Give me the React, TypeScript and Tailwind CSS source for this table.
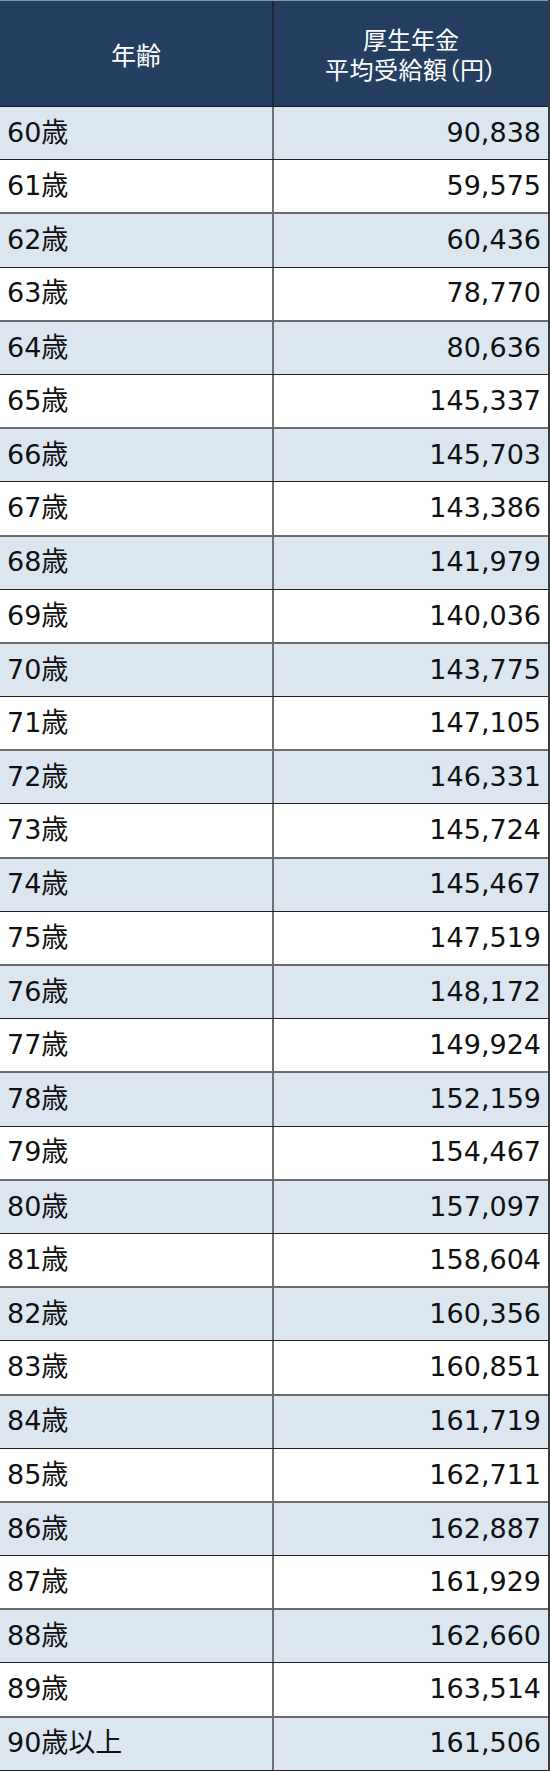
const rows: [string, string][] = [
  ["60歳", "90,838"],
  ["61歳", "59,575"],
  ["62歳", "60,436"],
  ["63歳", "78,770"],
  ["64歳", "80,636"],
  ["65歳", "145,337"],
  ["66歳", "145,703"],
  ["67歳", "143,386"],
  ["68歳", "141,979"],
  ["69歳", "140,036"],
  ["70歳", "143,775"],
  ["71歳", "147,105"],
  ["72歳", "146,331"],
  ["73歳", "145,724"],
  ["74歳", "145,467"],
  ["75歳", "147,519"],
  ["76歳", "148,172"],
  ["77歳", "149,924"],
  ["78歳", "152,159"],
  ["79歳", "154,467"],
  ["80歳", "157,097"],
  ["81歳", "158,604"],
  ["82歳", "160,356"],
  ["83歳", "160,851"],
  ["84歳", "161,719"],
  ["85歳", "162,711"],
  ["86歳", "162,887"],
  ["87歳", "161,929"],
  ["88歳", "162,660"],
  ["89歳", "163,514"],
  ["90歳以上", "161,506"],
];

export default function App() {
  return (
    <div className="w-[550px] h-[1771px] flex flex-col bg-white border-r-2 border-[#3a3a3a] font-['DejaVu_Sans','Noto_Sans_CJK_JP',sans-serif] text-[#111]">
      {/* ヘッダー */}
      <div className="h-[107px] shrink-0 grid grid-cols-[274px_1fr] bg-[#243f61] text-white font-['Noto_Sans_CJK_JP',sans-serif] text-[24px] leading-[30px] border-t border-[#8a96a6] border-b border-b-[#1a1a1a]">
        <div className="flex items-center justify-center border-r-2 border-[#1c2a3c] text-[25px]">年齢</div>
        <div className="flex flex-col items-center justify-center">
          <span>厚生年金</span>
          <span className="[font-feature-settings:'palt'] tracking-[0.5px]">平均受給額（円）</span>
        </div>
      </div>

      {rows.map(([age, amount], i) => (
        <div
          key={age}
          className={
            i % 2 === 0
              ? "flex-1 grid grid-cols-[274px_1fr] bg-[#dce6f1] border-b border-[#222]"
              : "flex-1 grid grid-cols-[274px_1fr] bg-white border-b-2 border-[#6b6b6b]"
          }
        >
          <div className="flex items-center pl-[7px] text-[27px] border-r-2 border-[#707070]">
            {age}
          </div>
          <div className="flex items-center justify-end pr-[7px] text-[27px]">{amount}</div>
        </div>
      ))}
    </div>
  );
}
